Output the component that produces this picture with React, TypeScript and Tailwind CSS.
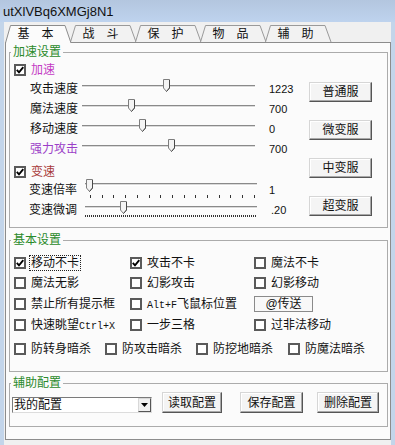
import React from "react";

const CJK = "[font-family:'Liberation_Sans','Noto_Sans_CJK_SC',sans-serif]";
const MONO = "[font-family:'Liberation_Mono',monospace]";

function Box({ checked }: { checked?: boolean }) {
  return (
    <span className="w-[12px] h-[12px] border-2 border-[#5a5a5a] bg-white flex items-center justify-center shrink-0">
      {checked && (
        <svg width="8" height="8" viewBox="0 0 8 8">
          <path d="M0.8 3.8 L3 6.3 L7.3 1.2" fill="none" stroke="#000" strokeWidth="1.9" />
        </svg>
      )}
    </span>
  );
}

function Thumb({ left, top }: { left: number; top: number }) {
  return (
    <svg width="7" height="13" viewBox="0 0 7 13" className="absolute" style={{ left: left - 3, top }}>
      <path d="M0.5 0.5H6.5V9L3.5 12.5L0.5 9Z" fill="#f4f4f4" stroke="#7d7d7d" />
      <path d="M6.5 1V9L3.5 12.5" fill="none" stroke="#4a4a4a" />
    </svg>
  );
}

function Track({ top }: { top: number }) {
  return (
    <div
      className="absolute left-0 right-0 h-[3px] border-t border-[#8a8a8a] border-b border-b-white bg-[#dadada]"
      style={{ top }}
    />
  );
}

function SRow({ label, color, pos, value }: { label: string; color: string; pos: number; value: string }) {
  return (
    <div className="flex items-center h-[20px]">
      <span className={`w-[52px] text-[12px] leading-none ${color}`}>{label}</span>
      <div className="relative w-[173px] h-full">
        <Track top={6} />
        <Thumb left={pos} top={0} />
      </div>
      <span className="ml-[14px] text-[11px] leading-none [font-family:'Liberation_Sans',sans-serif] text-[#111]">
        {value}
      </span>
    </div>
  );
}

function Btn({ children, className }: { children: React.ReactNode; className?: string }) {
  return (
    <div
      className={`flex items-center justify-center bg-[#f4f4f4] border border-[#d6d6d6] border-r-[#555] border-b-[#555] shadow-[inset_-1px_-1px_0_#a8a8a8,inset_1px_1px_0_#ffffff] text-[12px] leading-none text-[#111] ${className ?? ""}`}
    >
      {children}
    </div>
  );
}

function Check({ checked, children, className }: { checked?: boolean; children: React.ReactNode; className?: string }) {
  return (
    <div className={`flex items-center ${className ?? ""}`}>
      <Box checked={checked} />
      <span className="ml-[5px] text-[12px] leading-none text-[#111] whitespace-nowrap">{children}</span>
    </div>
  );
}

function Tab({ label, selected }: { label: string; selected?: boolean }) {
  return (
    <div className={`relative w-[65px] flex items-center justify-center ${selected ? "h-[19px] -mb-px z-10" : "h-[18px]"}`}>
      <svg width="70" height="19" viewBox="0 0 70 19" className="absolute left-0 top-0">
        {selected ? (
          <path d="M0.5 19 L5.5 1.5 H60 L66 19" fill="#fbfbfb" stroke="#8c8c8c" />
        ) : (
          <path d="M0.5 18 L5.5 1.5 H60 L66 18" fill="#f2f2f2" stroke="#9a9a9a" />
        )}
      </svg>
      <span className="relative text-[12px] leading-none text-[#111] -ml-[4px] pt-[1px]">{label}</span>
    </div>
  );
}

export default function App() {
  return (
    <div className={`w-[395px] h-[445px] bg-[#c3d5ea] flex flex-col overflow-hidden ${CJK}`}>
      {/* title bar */}
      <div className="h-[22px] bg-gradient-to-b from-[#b3c6df] to-[#bed3ee] flex items-center pl-[3px] shrink-0">
        <span className="text-[13px] leading-none text-[#111] [font-family:'Liberation_Sans',sans-serif]">utXlVBq6XMGj8N1</span>
      </div>
      {/* body */}
      <div className="flex-1 mx-[4px] bg-[#f0f0f0] pt-[2px] flex flex-col">
        <div className="flex items-end ml-[1px] h-[18px] relative z-10">
          <Tab label="基　本" selected />
          <Tab label="战　斗" />
          <Tab label="保　护" />
          <Tab label="物　品" />
          <Tab label="辅　助" />
        </div>
        <div className="ml-[1px] w-[386px] h-[398px] border border-[#8c8c8c] bg-[#fbfbfb] flex flex-col">
          {/* group 1 */}
          <fieldset className="ml-[3px] mr-[2px] mt-[2px] border border-[#ababab] pb-[6px]">
            <legend className="ml-[1px] px-[2px] text-[12px] leading-[14px] text-[#2a8a2a]">加速设置</legend>
            <div className="flex">
              <div className="w-[299px] flex flex-col">
                <div className="h-[18px] mt-[2px] pl-[4px] flex items-center">
                  <Box checked />
                  <span className="ml-[5px] text-[12px] leading-none text-[#c43cc4]">加速</span>
                </div>
                <div className="pl-[20px] flex flex-col">
                  <SRow label="攻击速度" color="text-[#111]" pos={84} value="1223" />
                  <SRow label="魔法速度" color="text-[#111]" pos={49} value="700" />
                  <SRow label="移动速度" color="text-[#111]" pos={60} value="0" />
                  <SRow label="强力攻击" color="text-[#9b3fc8]" pos={89} value="700" />
                </div>
                <div className="h-[18px] mt-[4px] pl-[4px] flex items-center">
                  <Box checked />
                  <span className="ml-[5px] text-[12px] leading-none text-[#a83a3a]">变速</span>
                </div>
                <div className="pl-[19px] flex items-center h-[18px]">
                  <span className="w-[56px] text-[12px] leading-none text-[#111]">变速倍率</span>
                  <div className="relative w-[172px] h-full">
                    <Track top={2} />
                    <Thumb left={4} top={-2} />
                    {Array.from({ length: 15 }).map((_, i) => (
                      <div key={i} className="absolute top-[14px] w-px h-[3px] bg-[#333]" style={{ left: 5 + i * 11.7 }} />
                    ))}
                  </div>
                  <span className="ml-[12px] text-[11px] leading-none [font-family:'Liberation_Sans',sans-serif] text-[#111]">1</span>
                </div>
                <div className="pl-[19px] flex items-center h-[22px]">
                  <span className="w-[56px] text-[12px] leading-none text-[#111]">变速微调</span>
                  <div className="relative w-[172px] h-full">
                    <Track top={7} />
                    <Thumb left={38} top={2} />
                    <div className="absolute left-0 right-0 top-[16px] h-[2px] bg-[repeating-linear-gradient(90deg,#333_0_1px,transparent_1px_2px)]" />
                  </div>
                  <span className="ml-[14px] text-[11px] leading-none [font-family:'Liberation_Sans',sans-serif] text-[#111]">.20</span>
                </div>
              </div>
              <div className="w-[63px] pt-[23px] flex flex-col gap-[18px]">
                <Btn className="h-[20px]">普通服</Btn>
                <Btn className="h-[20px]">微变服</Btn>
                <Btn className="h-[20px]">中变服</Btn>
                <Btn className="h-[20px]">超变服</Btn>
              </div>
            </div>
          </fieldset>

          {/* group 2 */}
          <fieldset className="ml-[3px] mr-[2px] mt-[5px] border border-[#ababab] pb-[12px]">
            <legend className="ml-[1px] px-[2px] text-[12px] leading-[14px] text-[#2a8a2a]">基本设置</legend>
            <div className="pt-[6px] pl-[4px] flex flex-col">
              <div className="h-[20px] flex items-center">
                <div className="w-[116px] flex items-center">
                  <Box checked />
                  <span className="ml-[4px] px-px py-[1px] outline-1 outline-dotted outline-[#222] text-[12px] leading-none text-[#111]">移动不卡</span>
                </div>
                <Check checked className="w-[124px]">攻击不卡</Check>
                <Check>魔法不卡</Check>
              </div>
              <div className="h-[20px] flex items-center">
                <Check className="w-[116px]">魔法无影</Check>
                <Check className="w-[124px]">幻影攻击</Check>
                <Check>幻影移动</Check>
              </div>
              <div className="h-[22px] flex items-center">
                <Check className="w-[116px]">禁止所有提示框</Check>
                <Check className="w-[124px]">
                  <span className={`${MONO} text-[10px]`}>Alt+F</span>飞鼠标位置
                </Check>
                <div className="w-[59px] h-[16px] border border-[#8a8a8a] bg-[#f8f8f8] flex items-center justify-center text-[12px] leading-none text-[#111]">
                  @传送
                </div>
              </div>
              <div className="h-[20px] flex items-center">
                <Check className="w-[116px]">
                  快速眺望<span className={`${MONO} text-[10px]`}>Ctrl+X</span>
                </Check>
                <Check className="w-[124px]">一步三格</Check>
                <Check>过非法移动</Check>
              </div>
              <div className="h-[20px] mt-[4px] flex items-center">
                <Check className="w-[91px]">防转身暗杀</Check>
                <Check className="w-[91px]">防攻击暗杀</Check>
                <Check className="w-[92px]">防挖地暗杀</Check>
                <Check>防魔法暗杀</Check>
              </div>
            </div>
          </fieldset>

          {/* group 3 */}
          <fieldset className="ml-[3px] mr-[2px] mt-[4px] border border-[#ababab] pb-[13px]">
            <legend className="ml-[1px] px-[2px] text-[12px] leading-[14px] text-[#2a8a2a]">辅助配置</legend>
            <div className="pt-[2px] flex items-start h-[23px]">
              <div className="ml-[2px] mt-[5px] w-[140px] h-[16px] bg-white border border-[#7a7a7a] border-r-[#dcdcdc] border-b-[#dcdcdc] flex items-center">
                <span className="flex-1 pl-[1px] text-[12px] leading-none text-[#111]">我的配置</span>
                <div className="w-[13px] h-[14px] bg-[#f0f0f0] border border-[#d8d8d8] border-r-[#555] border-b-[#555] flex items-center justify-center">
                  <svg width="7" height="4" viewBox="0 0 7 4">
                    <path d="M0 0H7L3.5 4Z" fill="#000" />
                  </svg>
                </div>
              </div>
              <Btn className="ml-[10px] w-[60px] h-[21px]">读取配置</Btn>
              <Btn className="ml-[18px] w-[63px] h-[21px]">保存配置</Btn>
              <Btn className="ml-[14px] w-[62px] h-[21px]">删除配置</Btn>
            </div>
          </fieldset>
        </div>
      </div>
    </div>
  );
}
